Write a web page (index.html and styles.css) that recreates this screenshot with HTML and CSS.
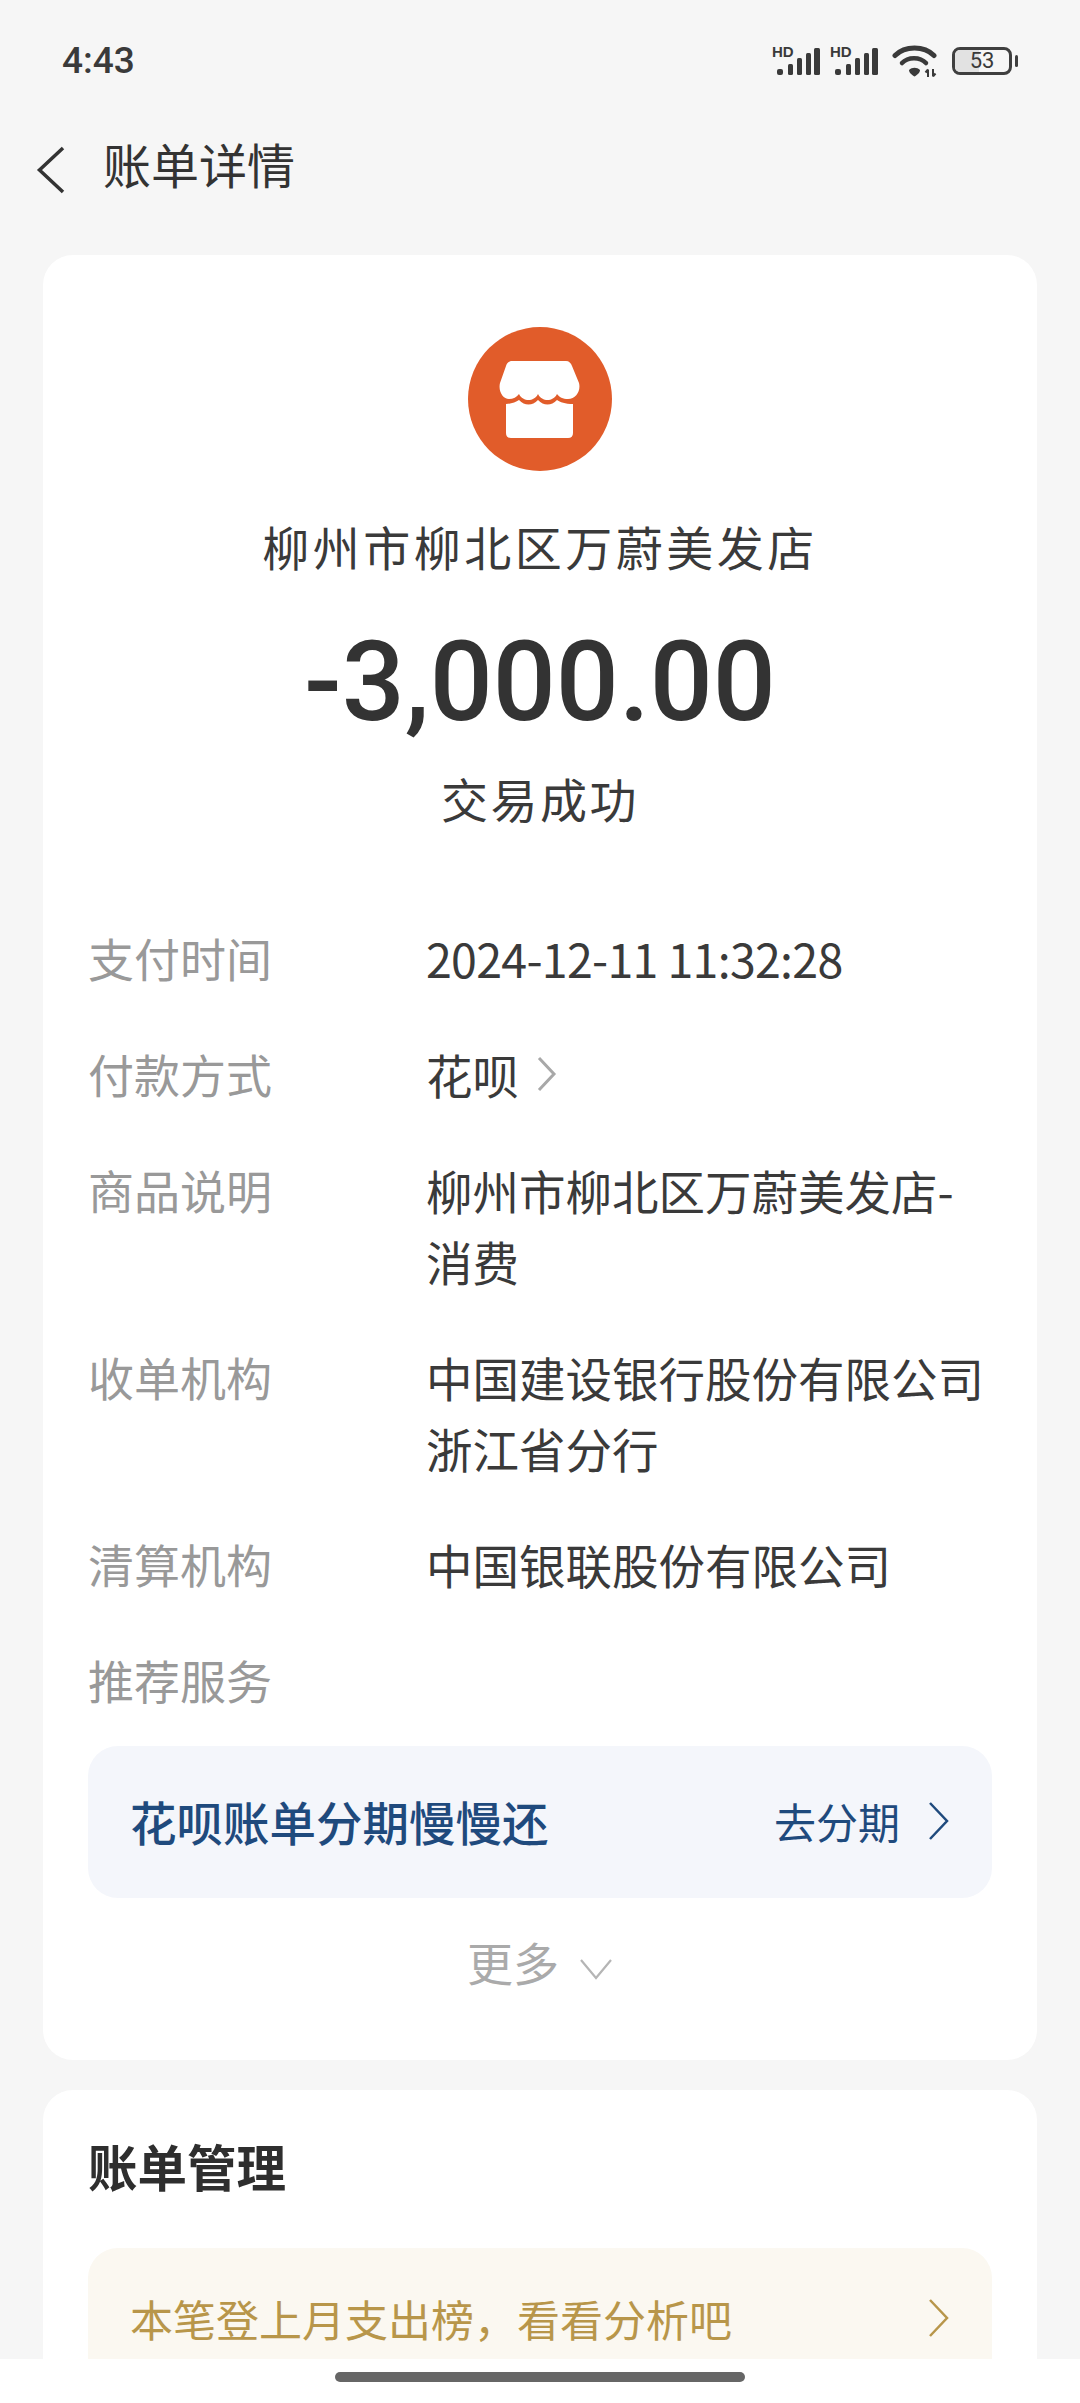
FILE: index.html
```html
<!DOCTYPE html>
<html lang="zh-CN">
<head>
<meta charset="utf-8">
<title>账单详情</title>
<link rel="stylesheet" href="styles.css">
</head>
<body>
<div class="screen">
  <header class="status">
    <span class="time">4:43</span>
    <div class="status-icons">
      <svg class="sig" viewBox="0 -4 48 34" width="48" height="34"><text x="0" y="11" class="hd">HD</text><rect x="5" y="23" width="6" height="6" rx="2"/><rect x="16" y="18" width="5" height="11" rx="1.500"/><rect x="25" y="12" width="5" height="17" rx="1.500"/><rect x="34" y="7" width="5" height="22" rx="1.500"/><rect x="42" y="2" width="6" height="27" rx="1.500"/></svg>
      <svg class="sig" viewBox="0 -4 48 34" width="48" height="34"><text x="0" y="11" class="hd">HD</text><rect x="5" y="23" width="6" height="6" rx="2"/><rect x="16" y="18" width="5" height="11" rx="1.500"/><rect x="25" y="12" width="5" height="17" rx="1.500"/><rect x="34" y="7" width="5" height="22" rx="1.500"/><rect x="42" y="2" width="6" height="27" rx="1.500"/></svg>
      <svg class="wifi" viewBox="0 0 45 32" width="45" height="32"><path d="M3 10.500C13 0.500 32 0.500 42 10.500" fill="none" stroke="#3a3a3a" stroke-width="5" stroke-linecap="round"/><path d="M10 18C16 11.500 28 11.500 34 18" fill="none" stroke="#3a3a3a" stroke-width="4.500" stroke-linecap="round"/><path d="M17 25C20 22 25 22 28 25C28 28 25 30 22.500 31.500C20 30 17 28 17 25Z" fill="#3a3a3a"/><path d="M36 32V24.500M36 24.500l-2.500 3M41 24v7.500M41 31.500l2.500-3" fill="none" stroke="#3a3a3a" stroke-width="2"/></svg>
      <div class="battery-wrap">
        <div class="battery"><span class="battery-fill"></span><span class="battery-num">53</span></div>
        <span class="battery-cap"></span>
      </div>
    </div>
  </header>

  <nav class="nav">
    <svg class="back" viewBox="0 0 30 48" width="30" height="48"><path d="M28 2L4.500 24L28 46" fill="none" stroke="#333" stroke-width="3.500"/></svg>
    <h1 class="nav-title">账单详情</h1>
  </nav>

  <main class="content">
    <section class="card card-main">
      <div class="merchant-icon">
        <svg viewBox="0 0 144 144" width="144" height="144"><circle cx="72" cy="72" r="72" fill="#e15c2a"/><path d="M44 34H98C101 34 103 36 104 39L111 56C113 64 108 72 100 72C95 72 91 70 89 67C87 71 83 73 79.500 73C76 73 72 71 70 67C68 71 64 73 60.500 73C57 73 53 71 51 67C49 70 45 72 41 72C35 72 30 64 32 56L38 39C39 36 41 34 44 34Z" fill="#fff"/><path d="M38 77C43 77 48 75 51 73C54 76 57 77.500 60.500 77.500C64 77.500 67 76 70 73C73 76 76 77.500 79.500 77.500C83 77.500 86 76 89 73C92 75 97 77 105 77V106Q105 111 100 111H43Q38 111 38 106Z" fill="#fff"/></svg>
      </div>
      <div class="merchant-name">柳州市柳北区万蔚美发店</div>
      <div class="amount">-3,000.00</div>
      <div class="trade-status">交易成功</div>

      <dl class="rows">
        <div class="row"><dt>支付时间</dt><dd class="date">2024-12-11 11:32:28</dd></div>
        <div class="row"><dt>付款方式</dt><dd class="pay">花呗<svg viewBox="0 0 20 36" width="20" height="36"><path d="M2 2l15 16L2 34" fill="none" stroke="#a8a8a8" stroke-width="3"/></svg></dd></div>
        <div class="row"><dt>商品说明</dt><dd>柳州市柳北区万蔚美发店-<br>消费</dd></div>
        <div class="row"><dt>收单机构</dt><dd>中国建设银行股份有限公司<br>浙江省分行</dd></div>
        <div class="row"><dt>清算机构</dt><dd>中国银联股份有限公司</dd></div>
        <div class="row"><dt>推荐服务</dt><dd></dd></div>
      </dl>

      <div class="promo promo-blue">
        <span class="promo-text">花呗账单分期慢慢还</span>
        <span class="promo-action">去分期<svg viewBox="0 0 22 40" width="22" height="40"><path d="M2 2l17 18L2 38" fill="none" stroke="#1f4a7d" stroke-width="2.500"/></svg></span>
      </div>

      <div class="more">更多<svg viewBox="0 0 34 22" width="34" height="22"><path d="M2 2l15 18L32 2" fill="none" stroke="#b5b5b5" stroke-width="2.200"/></svg></div>
    </section>

    <section class="card card-manage">
      <h2 class="manage-title">账单管理</h2>
      <div class="promo promo-gold">
        <span class="promo-text">本笔登上月支出榜，看看分析吧</span>
        <svg viewBox="0 0 22 40" width="22" height="40"><path d="M2 2l17 18L2 38" fill="none" stroke="#b8964a" stroke-width="2.500"/></svg>
      </div>
    </section>
  </main>

  <footer class="home-bar"><span class="home-pill"></span></footer>
</div>
</body>
</html>
```

FILE: styles.css
```css
* { box-sizing: border-box; }
html, body { margin: 0; padding: 0; }
body {
  width: 1080px;
  height: 2403px;
  overflow: hidden;
  background: #f6f6f6;
  font-family: "Noto Sans CJK SC", "Noto Sans", sans-serif;
  color: #333;
}
.screen {
  position: relative;
  width: 1080px;
  height: 2403px;
  overflow: hidden;
}
.status {
  height: 122px;
  padding: 40px 62px 0 62px;
  display: flex;
  justify-content: space-between;
  align-items: flex-start;
}
.time {
  font-family: Roboto, sans-serif;
  font-size: 37px;
  font-weight: 500;
  line-height: 42px;
  color: #3a3a3a;
}
.status-icons {
  display: flex;
  align-items: center;
  height: 42px;
}
.sig { fill: #3a3a3a; margin: 0 10px 4px 0; }
.sig + .wifi { margin: 0 15px 0 4px; }
.hd { font: 700 15px "Liberation Sans", sans-serif; }
.battery-wrap {
  display: flex;
  align-items: center;
  gap: 3px;
}
.battery {
  position: relative;
  width: 60px;
  height: 28px;
  border: 3px solid #3f3f3f;
  border-radius: 8px;
  display: flex;
  align-items: center;
  justify-content: center;
  overflow: hidden;
}
.battery-fill {
  position: absolute;
  left: 0;
  top: 0;
  bottom: 0;
  width: 45%;
  background: #e2e2e2;
}
.battery-num {
  position: relative;
  font: 400 22px/1 Roboto, sans-serif;
  color: #3a3a3a;
}
.battery-cap {
  width: 3px;
  height: 12px;
  border-radius: 2px;
  background: #3f3f3f;
}
.nav {
  height: 82px;
  display: flex;
  align-items: center;
  padding-left: 35px;
  gap: 38px;
}
.back { margin-top: 13px; flex: none; }
.nav-title {
  margin: 0;
  font-size: 48px;
  font-weight: 400;
  line-height: 60px;
  color: #333;
}
.content {
  padding: 51px 43px 0;
  display: flex;
  flex-direction: column;
  gap: 30px;
}
.card {
  background: #fff;
  border-radius: 30px;
}
.card-main {
  height: 1805px;
  padding: 72px 45px 0;
  display: flex;
  flex-direction: column;
  align-items: center;
}
.merchant-icon { height: 144px; }
.merchant-icon svg { display: block; }
.merchant-name {
  margin-top: 44px;
  font-size: 47px;
  line-height: 62px;
  color: #3a3a3a;
  letter-spacing: 3.500px;
}
.amount {
  margin-top: 45px;
  font-family: Roboto, sans-serif;
  font-size: 111px;
  font-weight: 500;
  line-height: 120px;
  color: #333;
}
.trade-status {
  margin-top: 25px;
  font-size: 47px;
  line-height: 62px;
  color: #3a3a3a;
  letter-spacing: 2.500px;
}
.rows {
  margin: 93px 0 0;
  width: 100%;
}
.row {
  display: flex;
  margin-bottom: 45px;
  font-size: 46.500px;
  line-height: 71px;
}
.row dt {
  width: 338px;
  color: #999;
  font-size: 46px;
  height: 71px;
  flex: none;
}
.row dd {
  margin: 0;
  color: #3a3a3a;
}
.row .date { letter-spacing: -0.700px; }
.row .pay { display: flex; align-items: center; gap: 18px; height: 71px; }
.promo {
  width: 100%;
  border-radius: 30px;
  display: flex;
  align-items: center;
  justify-content: space-between;
  padding: 0 42px;
  font-size: 46.500px;
}
.promo-blue {
  height: 152px;
  padding-bottom: 3px;
  background: #f4f6fb;
  color: #1f4a7d;
  margin-top: -14px;
  font-weight: 500;
}
.promo-action {
  display: flex;
  align-items: center;
  gap: 28px;
  font-size: 42px;
  font-weight: 400;
}
.more {
  margin-top: 32px;
  display: flex;
  align-items: center;
  gap: 20px;
  font-size: 46px;
  line-height: 62px;
  color: #aaa;
}
.more svg { margin-top: 16px; }
.card-manage {
  height: 400px;
  padding: 43px 45px 0;
}
.manage-title {
  margin: 0;
  font-size: 49.500px;
  font-weight: 700;
  line-height: 66px;
  color: #2e2e2e;
}
.promo-gold {
  margin-top: 49px;
  height: 200px;
  align-items: flex-start;
  padding-top: 37px;
  background: #fbf8f1;
  color: #b8964a;
  font-size: 43px;
  line-height: 66px;
}
.promo-gold svg { margin-top: 13px; }
.home-bar {
  position: absolute;
  left: 0;
  right: 0;
  bottom: 0;
  height: 44px;
  background: #fff;
  display: flex;
  justify-content: center;
  padding-top: 13px;
}
.home-pill {
  width: 410px;
  height: 10px;
  border-radius: 5px;
  background: #666;
}
```
